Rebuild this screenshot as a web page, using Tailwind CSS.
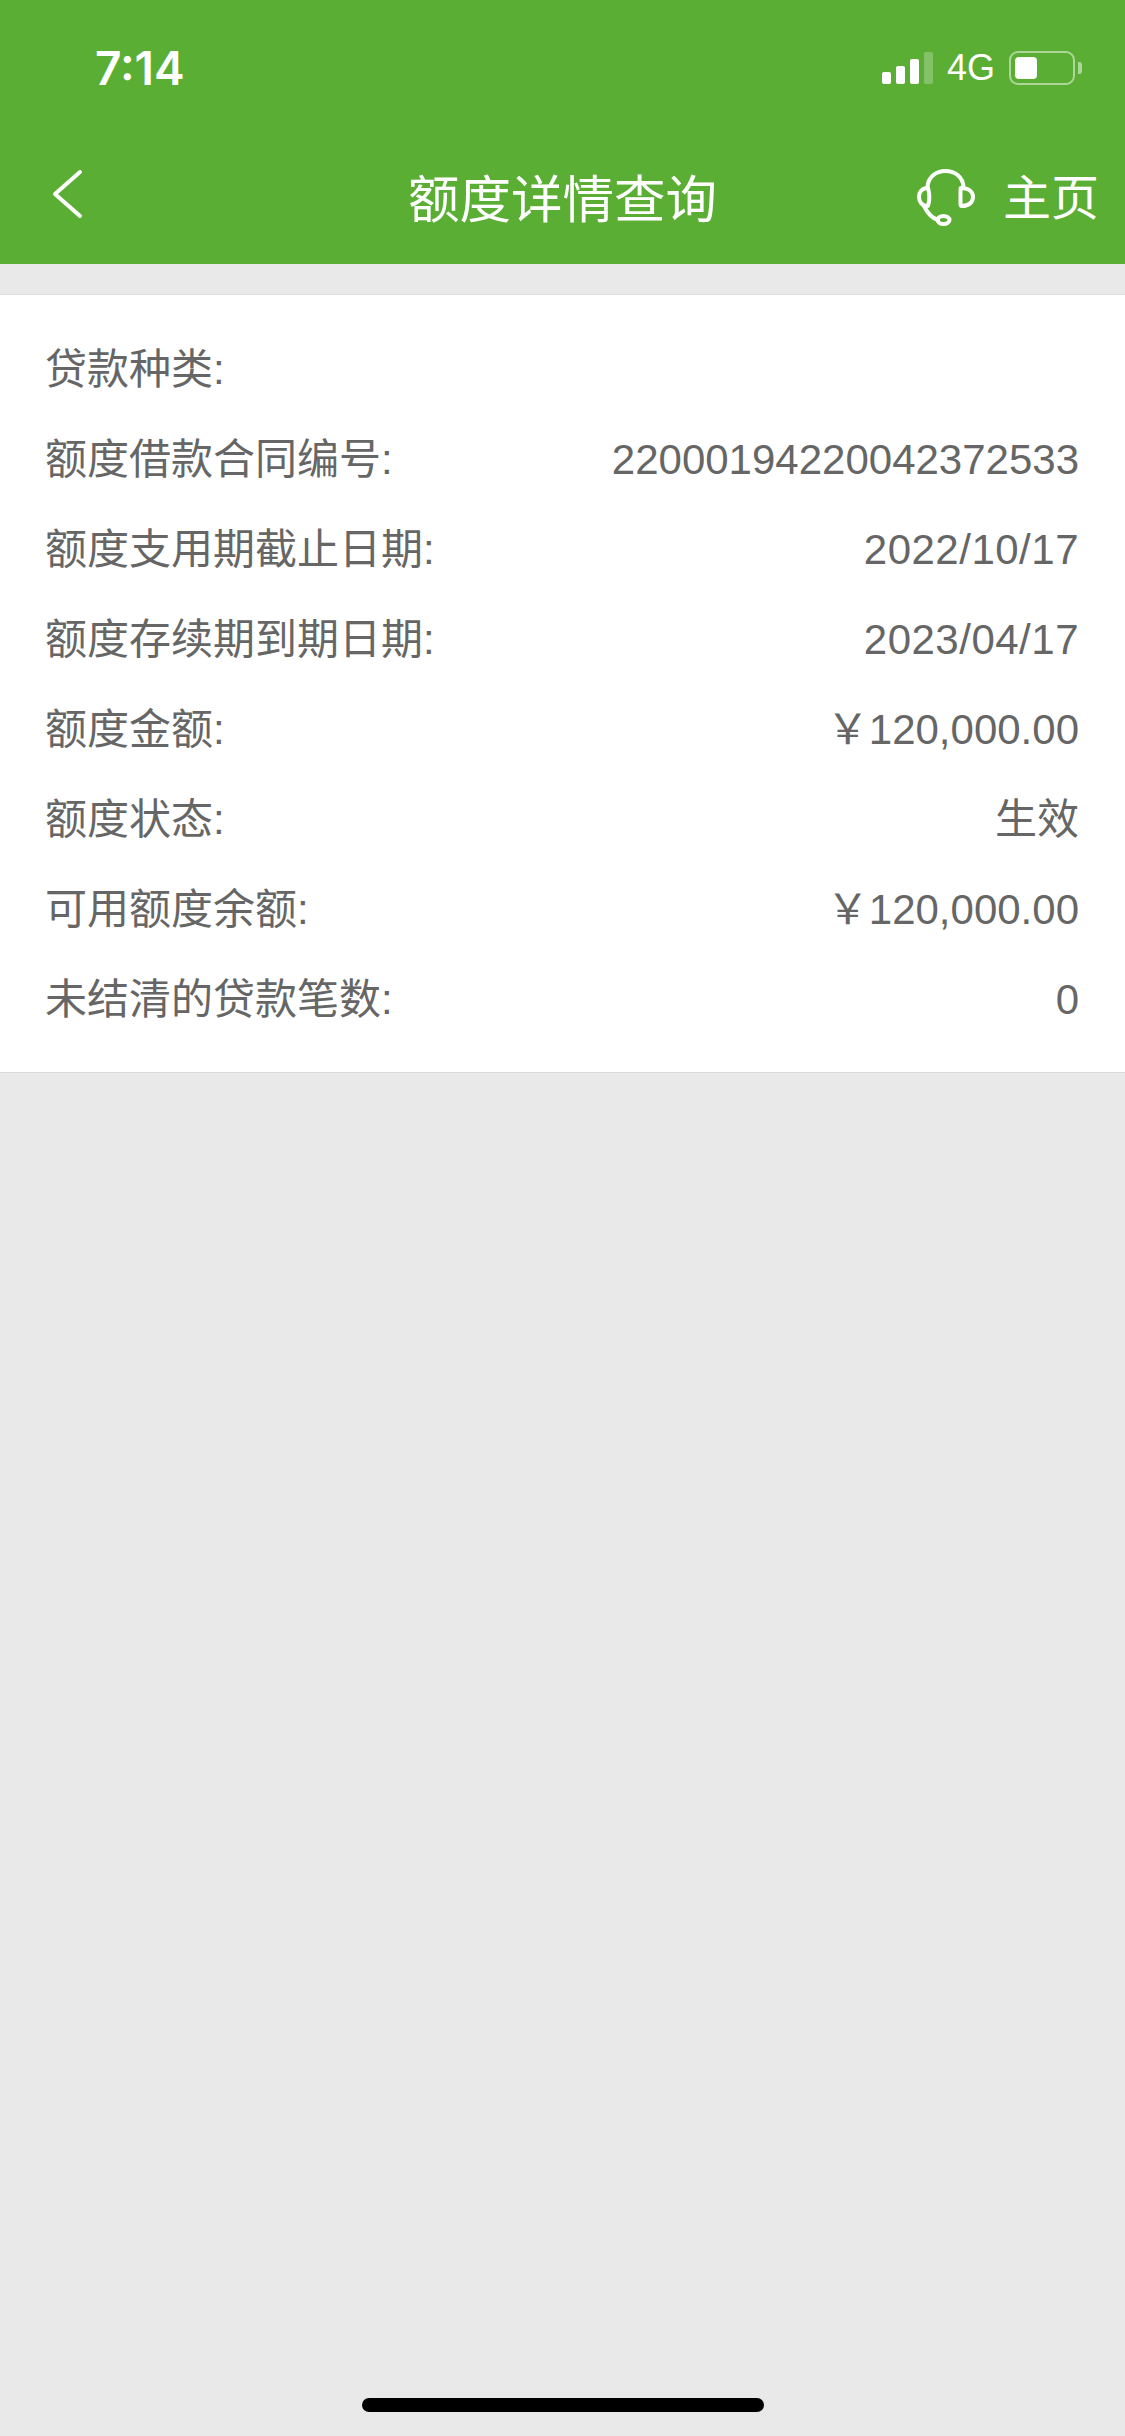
<!DOCTYPE html>
<html lang="zh-CN">
<head>
  <meta charset="UTF-8">
  <title>额度详情查询</title>
  <script src="https://cdn.jsdelivr.net/npm/@tailwindcss/browser@4"></script>
</head>
<body class="bg-[#e9e9e9] font-['Liberation_Sans','Noto_Sans_CJK_SC',sans-serif]">
  <div class="relative w-[1125px] h-[2436px] overflow-hidden">
    <header class="bg-[#5aae33] text-white h-[264px]">
      <!-- status bar -->
      <div class="h-[132px] flex items-center pl-[95px] pr-[43px] pt-[4px]">
        <span class="font-['Inter'] font-semibold text-[46px] leading-none">7:14</span>
        <div class="ml-auto flex items-end h-[32px] gap-[5px]">
          <div class="w-[9px] h-[12px] rounded-[2px] bg-white"></div>
          <div class="w-[9px] h-[18px] rounded-[2px] bg-white"></div>
          <div class="w-[9px] h-[25px] rounded-[2px] bg-white"></div>
          <div class="w-[9px] h-[32px] rounded-[2px] bg-white/25"></div>
        </div>
        <span class="ml-[14px] text-[36px] leading-none">4G</span>
        <div class="ml-[14px] w-[66px] h-[34px] rounded-[9px] border-[2px] border-white/50 p-[4px]">
          <div class="w-[22px] h-full rounded-[4px] bg-white"></div>
        </div>
        <div class="ml-[3px] w-[4px] h-[12px] rounded-r-[3px] bg-white/50"></div>
      </div>
      <!-- nav bar -->
      <div class="h-[132px] grid grid-cols-[1fr_auto_1fr] items-center px-[26px]">
        <svg class="ml-[26px] mb-[8px] w-[32px] h-[52px]" viewBox="0 0 32 52" fill="none" stroke="white" stroke-width="4" stroke-linecap="round" stroke-linejoin="round">
          <path d="M28 4 L3 26 L28 48" />
        </svg>
        <h1 class="mt-[6px] text-[51.5px] leading-none font-normal">额度详情查询</h1>
        <div class="flex items-center justify-end">
          <svg class="w-[58px] h-[58px]" viewBox="0 0 58 58" fill="none" stroke="white" stroke-width="4" stroke-linecap="round" stroke-linejoin="round">
            <path d="M10.500 18 C11 8 19 2 28.500 2 C38 2 46 8 46.500 18" />
            <path d="M11 19 C5 19 2 23 2 28 C2 33 5 37 11 37 C12.500 32 12.500 24 11 19 Z" />
            <path d="M44 19 C52 19 56 23 56 28 C56 33 52 37 45 37 C43.500 37 43.500 36 43.500 35 L43.500 20 C43.500 19 44 19 44 19 Z" />
            <path d="M7 37 C10 43 14 49 21 51" />
            <ellipse cx="26.500" cy="51" rx="6" ry="4" />
          </svg>
          <span class="ml-[28px] mt-[2px] text-[48px] leading-none">主页</span>
        </div>
      </div>
    </header>

    <main class="mt-[30px] bg-white border-y border-[#dcdcdc] pt-[30px] pb-[27px] pl-[45px] pr-[46px] text-[42px] leading-[90px] text-[#666666]">
      <div class="flex justify-between h-[90px]"><span>贷款种类:</span><span></span></div>
      <div class="flex justify-between h-[90px]"><span>额度借款合同编号:</span><span>22000194220042372533</span></div>
      <div class="flex justify-between h-[90px]"><span>额度支用期截止日期:</span><span class="tracking-[0.5px]">2022/10/17</span></div>
      <div class="flex justify-between h-[90px]"><span>额度存续期到期日期:</span><span class="tracking-[0.5px]">2023/04/17</span></div>
      <div class="flex justify-between h-[90px]"><span>额度金额:</span><span>￥120,000.00</span></div>
      <div class="flex justify-between h-[90px]"><span>额度状态:</span><span>生效</span></div>
      <div class="flex justify-between h-[90px]"><span>可用额度余额:</span><span>￥120,000.00</span></div>
      <div class="flex justify-between h-[90px]"><span>未结清的贷款笔数:</span><span>0</span></div>
    </main>

    <div class="absolute left-[362px] top-[2398px] w-[402px] h-[14px] rounded-full bg-black"></div>
  </div>
</body>
</html>
